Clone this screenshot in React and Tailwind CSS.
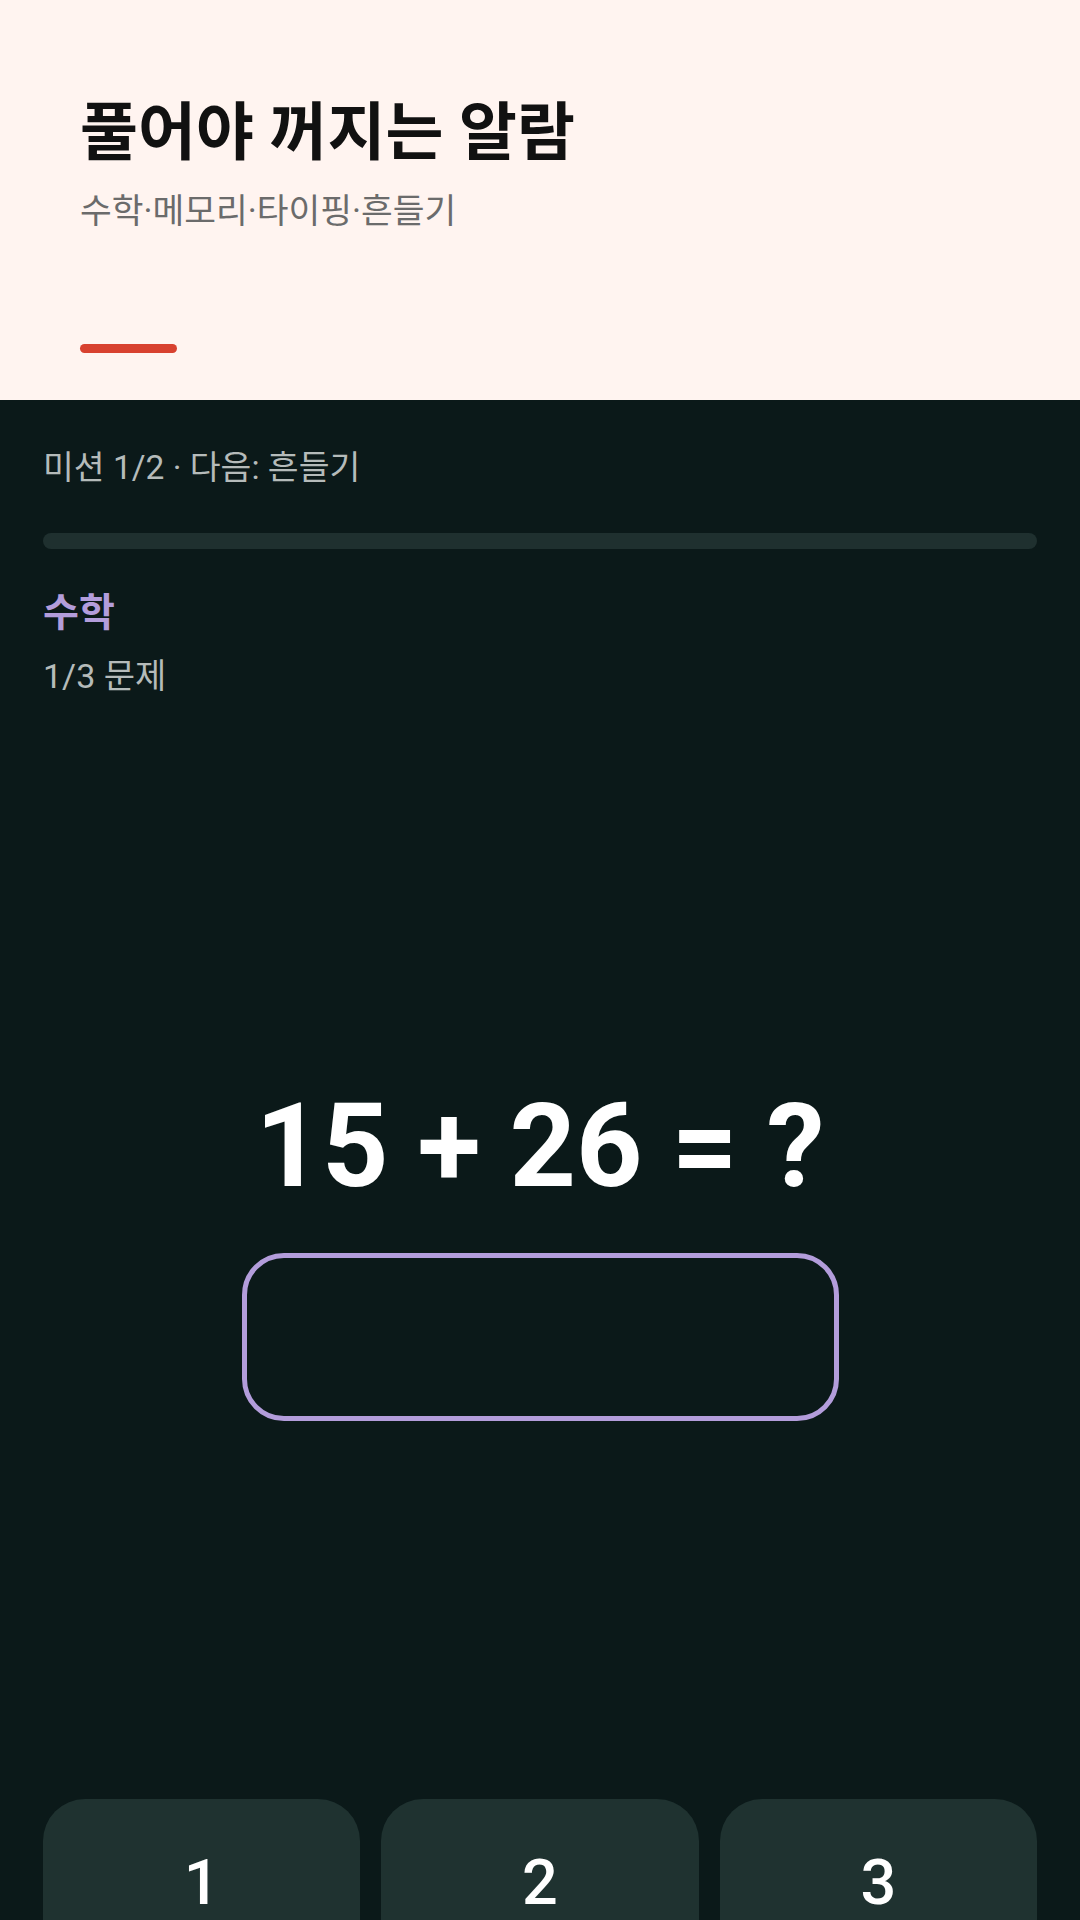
import React from "react";

const keys = ["1", "2", "3"];

const App = () => {
  return (
    <div
      className="h-[1920px] w-[1080px] overflow-hidden bg-[#0b1919]"
      style={{ fontFamily: "Roboto, 'Noto Sans CJK KR', sans-serif" }}
    >
      {/* header */}
      <div className="h-[400px] bg-[#fff4f0] pl-[80px] pt-[101px]">
        <h1 className="text-[63px] leading-none font-bold text-[#111111]">
          풀어야 꺼지는 알람
        </h1>
        <p className="mt-[30px] text-[34.5px] leading-none text-[#6b6b6b]">
          수학·메모리·타이핑·흔들기
        </p>
        <div className="mt-[115px] h-[9px] w-[97px] rounded-full bg-[#d8412f]" />
      </div>

      {/* mission */}
      <div className="px-[43px] pt-[51px]">
        <p className="text-[33.5px] leading-none text-[#b5bbba]">
          미션 1/2 · 다음: 흔들기
        </p>
        <div className="mt-[48px] h-[16px] w-full rounded-full bg-[#1f302f]" />
        <h2 className="mt-[45px] text-[39px] leading-none font-bold text-[#b39ddb]">
          수학
        </h2>
        <p className="mt-[26px] text-[34px] leading-none text-[#b5bbba]">
          1/3 문제
        </p>

        <div className="mt-[395px] text-center text-[116px] leading-none font-bold text-white">
          15 + 26 = ?
        </div>

        <div className="mx-auto mt-[49px] h-[168px] w-[597px] rounded-[42px] border-[5px] border-[#b39ddb]" />

        <div className="mt-[378px] grid grid-cols-3 gap-[21px]">
          {keys.map((k) => (
            <button
              key={k}
              className="flex h-[168px] items-center justify-center rounded-[42px] bg-[#1f3230] text-[63px] leading-none font-medium text-white"
            >
              {k}
            </button>
          ))}
        </div>
      </div>
    </div>
  );
};

export default App;
